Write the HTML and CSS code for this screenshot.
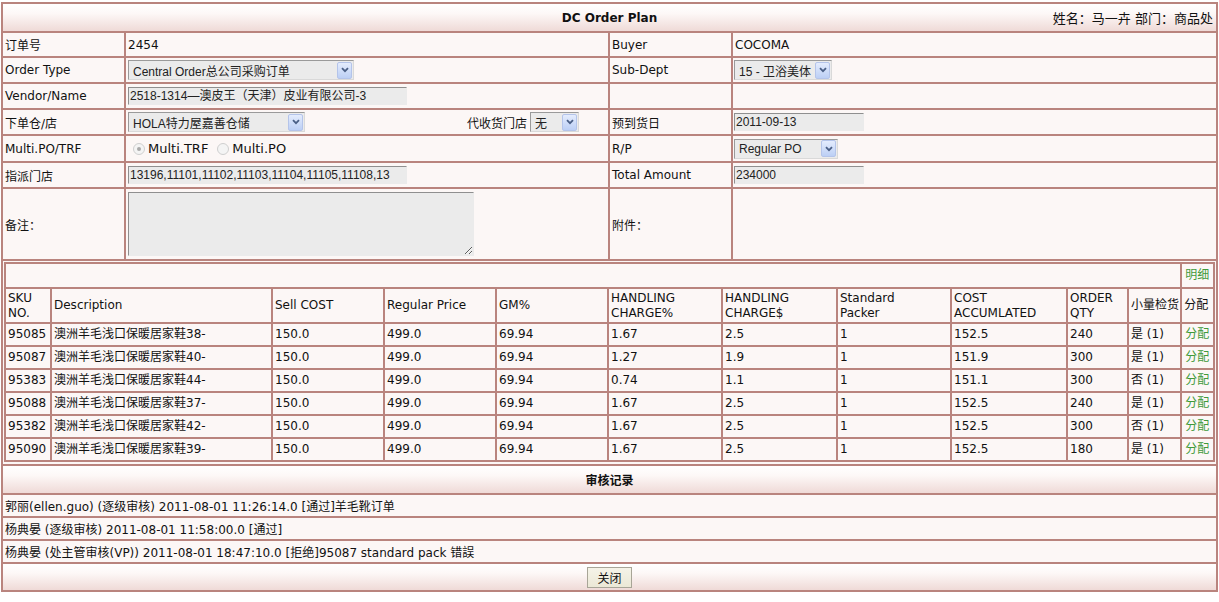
FILE: index.html
```html
<!DOCTYPE html>
<html lang="zh-CN">
<head>
<meta charset="utf-8">
<title>DC Order Plan</title>
<link rel="stylesheet" href="styles.css">
</head>
<body>
<table class="sheet">
  <colgroup><col class="c1"><col class="c2"><col class="c3"><col class="c4"></colgroup>
  <tr class="r-head">
    <td colspan="4" class="grad">
      <div class="head-grid"><span></span><b class="title">DC Order Plan</b><span class="user">姓名：马一卉 部门：商品处</span></div>
    </td>
  </tr>
  <tr class="r-first">
    <td>订单号</td><td>2454</td><td>Buyer</td><td>COCOMA</td>
  </tr>
  <tr class="r-row">
    <td>Order Type</td>
    <td><span class="sel w-type"><span class="sel-text">Central Order总公司采购订单</span><span class="sel-btn"><svg width="8" height="6" viewBox="0 0 8 6"><path d="M1 1.2 L4 4.2 L7 1.2" fill="none" stroke="#4a5f86" stroke-width="1.8"/></svg></span></span></td>
    <td>Sub-Dept</td>
    <td><span class="sel w-sub"><span class="sel-text">15 - 卫浴美体</span><span class="sel-btn"><svg width="8" height="6" viewBox="0 0 8 6"><path d="M1 1.2 L4 4.2 L7 1.2" fill="none" stroke="#4a5f86" stroke-width="1.8"/></svg></span></span></td>
  </tr>
  <tr class="r-row">
    <td>Vendor/Name</td>
    <td><span class="inp w-long">2518-1314—澳皮王（天津）皮业有限公司-3</span></td>
    <td></td><td></td>
  </tr>
  <tr class="r-row">
    <td>下单仓/店</td>
    <td>
      <div class="split">
        <span class="sel w-wh"><span class="sel-text">HOLA特力屋嘉善仓储</span><span class="sel-btn"><svg width="8" height="6" viewBox="0 0 8 6"><path d="M1 1.2 L4 4.2 L7 1.2" fill="none" stroke="#4a5f86" stroke-width="1.8"/></svg></span></span>
        <span class="agent">代收货门店 <span class="sel w-none"><span class="sel-text">无</span><span class="sel-btn"><svg width="8" height="6" viewBox="0 0 8 6"><path d="M1 1.2 L4 4.2 L7 1.2" fill="none" stroke="#4a5f86" stroke-width="1.8"/></svg></span></span></span>
      </div>
    </td>
    <td>预到货日</td>
    <td><span class="inp w-short">2011-09-13</span></td>
  </tr>
  <tr class="r-multi">
    <td>Multi.PO/TRF</td>
    <td>
      <span class="radio on"></span><span class="rlabel">Multi.TRF</span>
      <span class="radio"></span><span class="rlabel">Multi.PO</span>
    </td>
    <td>R/P</td>
    <td><span class="sel w-rp"><span class="sel-text">Regular PO</span><span class="sel-btn"><svg width="8" height="6" viewBox="0 0 8 6"><path d="M1 1.2 L4 4.2 L7 1.2" fill="none" stroke="#4a5f86" stroke-width="1.8"/></svg></span></span></td>
  </tr>
  <tr class="r-row">
    <td>指派门店</td>
    <td><span class="inp w-long">13196,11101,11102,11103,11104,11105,11108,13</span></td>
    <td>Total Amount</td>
    <td><span class="inp w-short">234000</span></td>
  </tr>
  <tr class="r-memo">
    <td>备注：</td>
    <td><textarea class="memo" readonly></textarea></td>
    <td>附件：</td>
    <td></td>
  </tr>
  <tr>
    <td colspan="4" class="wrap">
      <table class="items">
        <colgroup>
          <col class="k1"><col class="k2"><col class="k3"><col class="k3"><col class="k3"><col class="k6"><col class="k7"><col class="k6"><col class="k9"><col class="k10"><col class="k11"><col>
        </colgroup>
        <tr class="i-tools"><td colspan="11"></td><td class="link">明细</td></tr>
        <tr class="i-head">
          <td>SKU<br>NO.</td><td>Description</td><td>Sell COST</td><td>Regular Price</td><td>GM%</td>
          <td>HANDLING<br>CHARGE%</td><td>HANDLING<br>CHARGE$</td><td>Standard<br>Packer</td><td>COST<br>ACCUMLATED</td><td>ORDER<br>QTY</td><td>小量检货</td><td>分配</td>
        </tr>
        <tr class="i-row"><td>95085</td><td>澳洲羊毛浅口保暖居家鞋38-</td><td>150.0</td><td>499.0</td><td>69.94</td><td>1.67</td><td>2.5</td><td>1</td><td>152.5</td><td>240</td><td>是 (1)</td><td class="link">分配</td></tr>
        <tr class="i-row"><td>95087</td><td>澳洲羊毛浅口保暖居家鞋40-</td><td>150.0</td><td>499.0</td><td>69.94</td><td>1.27</td><td>1.9</td><td>1</td><td>151.9</td><td>300</td><td>是 (1)</td><td class="link">分配</td></tr>
        <tr class="i-row"><td>95383</td><td>澳洲羊毛浅口保暖居家鞋44-</td><td>150.0</td><td>499.0</td><td>69.94</td><td>0.74</td><td>1.1</td><td>1</td><td>151.1</td><td>300</td><td>否 (1)</td><td class="link">分配</td></tr>
        <tr class="i-row"><td>95088</td><td>澳洲羊毛浅口保暖居家鞋37-</td><td>150.0</td><td>499.0</td><td>69.94</td><td>1.67</td><td>2.5</td><td>1</td><td>152.5</td><td>240</td><td>是 (1)</td><td class="link">分配</td></tr>
        <tr class="i-row"><td>95382</td><td>澳洲羊毛浅口保暖居家鞋42-</td><td>150.0</td><td>499.0</td><td>69.94</td><td>1.67</td><td>2.5</td><td>1</td><td>152.5</td><td>300</td><td>否 (1)</td><td class="link">分配</td></tr>
        <tr class="i-row"><td>95090</td><td>澳洲羊毛浅口保暖居家鞋39-</td><td>150.0</td><td>499.0</td><td>69.94</td><td>1.67</td><td>2.5</td><td>1</td><td>152.5</td><td>180</td><td>是 (1)</td><td class="link">分配</td></tr>
      </table>
    </td>
  </tr>
  <tr class="r-audit-head">
    <td colspan="4" class="grad center"><b>审核记录</b></td>
  </tr>
  <tr class="r-audit"><td colspan="4">郭丽(ellen.guo) (逐级审核) 2011-08-01 11:26:14.0 [通过]羊毛靴订单</td></tr>
  <tr class="r-audit"><td colspan="4">杨典晏 (逐级审核) 2011-08-01 11:58:00.0 [通过]</td></tr>
  <tr class="r-audit"><td colspan="4">杨典晏 (处主管审核(VP)) 2011-08-01 18:47:10.0 [拒绝]95087 standard pack 错誤</td></tr>
  <tr class="r-btn">
    <td colspan="4" class="grad center"><button class="close" type="button">关闭</button></td>
  </tr>
</table>
</body>
</html>
```

FILE: styles.css
```css
* { box-sizing: border-box; }
html, body { margin: 0; padding: 0; background: #ffffff; }
body {
  padding: 2px 1px 0 1px;
  font-family: "DejaVu Sans", "Noto Sans CJK SC", sans-serif;
  font-size: 12px;
  color: #111111;
}

.sheet {
  width: 100%;
  table-layout: fixed;
  border-collapse: separate;
  border-spacing: 0;
  border: 1px solid #b9847e;
  background: #fcf7f6;
}
.sheet td {
  border: 1px solid #b9847e;
  padding: 0 2px;
  vertical-align: middle;
  white-space: nowrap;
  overflow: hidden;
}
.c1 { width: 123px; }
.c2 { width: 484px; }
.c3 { width: 123px; }

.grad {
  background: linear-gradient(#ffffff 0%, #fdf8f7 35%, #efdad7 100%);
}
.center { text-align: center; }

.r-head > td { height: 29px; }
.r-first > td { height: 25px; }
.r-row > td { height: 26px; }
.r-multi > td { height: 27px; }
.r-memo > td { height: 72px; }
.r-audit-head > td { height: 29px; }
.r-audit > td { height: 23px; }
.r-btn > td { height: 28px; }

.head-grid {
  display: grid;
  grid-template-columns: 1fr auto 1fr;
  align-items: center;
}
.title { font-weight: bold; font-size: 12px; }
.user { text-align: right; padding-right: 1px; font-size: 13px; }

/* faux selects */
.sel {
  display: inline-flex;
  align-items: center;
  height: 20px;
  vertical-align: middle;
  background: #ebebeb;
  border: 1px solid;
  border-color: #9a9a9a #d9d9d9 #d9d9d9 #9a9a9a;
  font-family: "Liberation Sans", "Noto Sans CJK SC", sans-serif;
  font-size: 12px;
  color: #222;
}
.sel-text { flex: 1; padding-left: 4px; overflow: hidden; white-space: nowrap; }
.sel-btn {
  width: 15px;
  height: 17px;
  margin-right: 1px;
  display: flex;
  align-items: center;
  justify-content: center;
  border: 1px solid #b4c4ea;
  border-radius: 2px;
  background: linear-gradient(#e4ecfd, #bccff5);
}
.w-type { width: 226px; }
.w-sub { width: 98px; margin-left: -1px; }
.w-wh { width: 177px; }
.w-none { width: 49px; }
.w-rp { width: 104px; margin-left: -1px; }

.split { display: flex; align-items: center; justify-content: space-between; padding-right: 27px; }
.agent { display: inline-flex; align-items: center; gap: 3px; }

/* faux inputs */
.inp {
  display: inline-block;
  height: 18px;
  line-height: 17px;
  vertical-align: middle;
  background: #ebebeb;
  border: 1px solid;
  border-color: #8f8f8f #ebebeb #ebebeb #8f8f8f;
  padding-left: 1px;
  font-family: "Liberation Sans", "Noto Sans CJK SC", sans-serif;
  font-size: 12px;
  overflow: hidden;
  white-space: nowrap;
  color: #222;
}
.w-long { width: 279px; }
.w-short { width: 130px; margin-left: -1px; }

/* radios */
.radio {
  display: inline-block;
  width: 12px;
  height: 12px;
  border-radius: 50%;
  border: 1px solid #cfcfcf;
  background: #f4f4f4;
  vertical-align: middle;
  margin: 0 3px 0 5px;
  position: relative;
}
.radio.on::after {
  content: "";
  position: absolute;
  left: 3px; top: 3px;
  width: 4px; height: 4px;
  border-radius: 50%;
  background: #a9a9a9;
}
.rlabel { vertical-align: middle; font-size: 13px; }

.memo {
  display: block;
  width: 346px;
  height: 64px;
  margin: 0;
  background: #ebebeb;
  border: 1px solid;
  border-color: #8f8f8f #ebebeb #ebebeb #8f8f8f;
  resize: both;
}

/* items table */
.sheet td.wrap { padding: 1px 1px 2px 1px; }
.items {
  width: 100%;
  table-layout: fixed;
  border-collapse: separate;
  border-spacing: 0;
  border: 1px solid #b9847e;
}
.items td {
  border: 1px solid #b9847e;
  padding: 0 2px;
  vertical-align: middle;
  white-space: nowrap;
  overflow: hidden;
  line-height: 15px;
}
.k1 { width: 46px; }
.k2 { width: 221px; }
.k3 { width: 112px; }
.k6 { width: 114px; }
.k7 { width: 115px; }
.k9 { width: 116px; }
.k10 { width: 61px; }
.k11 { width: 53px; }

.i-tools > td { height: 25px; }
.i-head > td { height: 35px; }
.i-row > td { height: 23px; }
.items td.link { color: #3f9a3a; padding: 0 1px 0 3px; }

.close {
  width: 45px;
  height: 21px;
  padding: 0;
  font-family: "Noto Sans CJK SC", sans-serif;
  font-size: 12px;
  color: #111;
  background: linear-gradient(#f5f3e8, #ebe8d6);
  border: 1px solid #a8a597;
  border-radius: 0;
  vertical-align: middle;
}
```
